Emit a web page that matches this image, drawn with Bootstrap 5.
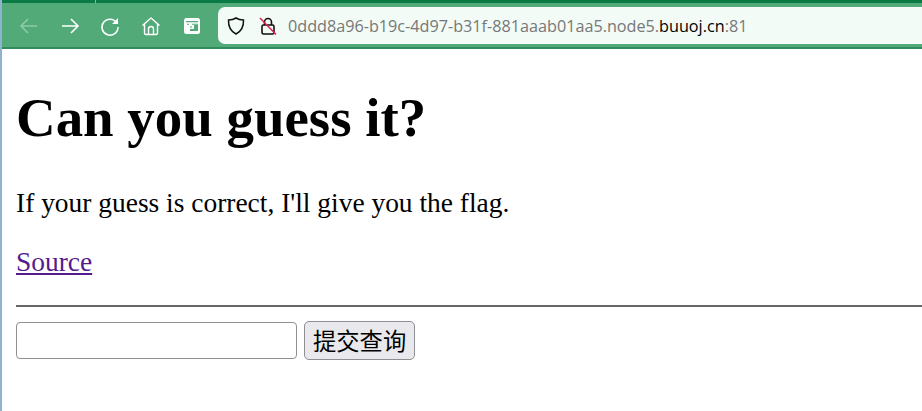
<!DOCTYPE html>
<html lang="en">
<head>
  <meta charset="UTF-8">
  <title>Can you guess it?</title>
  <link href="https://cdn.jsdelivr.net/npm/bootstrap@5.3.0/dist/css/bootstrap.min.css" rel="stylesheet">
  <style>
    html, body { height: 100%; overflow: hidden; }
    body { background: #fff; font-family: "Liberation Serif", serif; font-size: 27.45px; line-height: normal; color: #000; }
    .win-frame { height: 411px; border-left: 2px solid #8fb3cf; }
    .top-strip { height: 3px; background: #0a7a45; }
    .strip-tab { width: 94px; height: 3px; border-right: 1px solid #7fbf9c; }
    .tool-bar { height: 46px; background: #53aa79; border-bottom: 2px solid #2f8d5b; padding-top: 4px; padding-bottom: 3px; }
    .tool-btn { width: 40.5px; height: 24px; flex: none; }
    .tool-btn svg { display: block; }
    .tool-icons { padding-left: 15px; width: 216px; flex: none; }
    .addr-box { background: #f2fbf6; border-radius: 7px 0 0 7px; height: 37px; padding-left: 8px; font-family: "Open Sans", "Noto Sans", sans-serif; font-size: 16.2px; color: #777; }
    .addr-ico { width: 32px; flex: none; }
    .addr-url { margin-left: -2px; white-space: nowrap; }
    .addr-url b { font-weight: 400; color: #000; }
    .page-body { padding: 0 0 0 14px; }
    .page-body h1 { font-family: inherit; font-size: 54.9px; font-weight: 700; line-height: normal; margin: 37px 0 39px; }
    .page-body p { margin: 27.5px 0; }
    .src-link { color: #551a8b; text-decoration: underline; }
    .page-rule { border: 0; border-top: 2px solid #666; opacity: 1; margin: 26px 0 14px; }
    .guess-input { width: 281px; height: 37px; border: 1px solid #8e8e93; border-radius: 4px; background: #fff; font-size: 16px; padding: 0 2px; }
    .guess-btn { height: 39px; margin-left: 7px; padding: 0 8px; border: 1px solid #8e8e93; border-radius: 5px; background: #e9e9ed; font-family: "Noto Sans CJK SC", sans-serif; font-size: 23.3px; line-height: 1; color: #000; }
  </style>
</head>
<body>
  <div class="win-frame">
    <div class="top-strip"><div class="strip-tab"></div></div>
    <div class="tool-bar d-flex align-items-center">
      <div class="tool-icons d-flex align-items-center">
        <div class="tool-btn"><svg width="24" height="24" viewBox="0 0 24 24" fill="none" stroke="#8fcaa9" stroke-width="1.6"><path d="M4 12h16M11 5l-7 7 7 7"/></svg></div>
        <div class="tool-btn"><svg width="24" height="24" viewBox="0 0 24 24" fill="none" stroke="#fff" stroke-width="1.6"><path d="M4 12h16M13 5l7 7-7 7"/></svg></div>
        <div class="tool-btn"><svg width="24" height="24" viewBox="0 0 24 24" fill="none" stroke="#fff" stroke-width="1.5"><path d="M18.500 8.500A8 8 0 1 0 20 13"/><path d="M20 4v6h-6z" fill="#fff" stroke="none"/></svg></div>
        <div class="tool-btn"><svg width="24" height="24" viewBox="0 0 24 24" fill="none" stroke="#fff" stroke-width="1.400" stroke-linejoin="round"><path d="M3.500 11.500 12 4l8.500 7.500M5.500 10v9a1.500 1.500 0 0 0 1.500 1.500h10a1.500 1.500 0 0 0 1.500-1.500v-9"/><path d="M9.500 20.500v-5.500a2.500 2.500 0 0 1 5 0v5.500"/></svg></div>
        <div class="tool-btn"><svg width="24" height="24" viewBox="0 0 24 24"><rect x="5" y="4" width="16" height="16" rx="2.500" fill="#fff"/><path d="M7 7h12v1.200H7zM8 9.800h2v1H8zM13 9.800h6v1H13zM11 12.500h2v1h-2zM15 11h4v6h-8v-2h4z" fill="#53aa79"/></svg></div>
      </div>
      <div class="addr-box d-flex align-items-center flex-grow-1">
        <div class="addr-ico"><svg class="d-block" width="20" height="20" viewBox="0 0 20 20" fill="none" stroke="#111" stroke-width="1.500"><path d="M10 2c2 1.300 4.500 2 7.500 2 .3 6.500-1.700 11-7.500 14-5.800-3-7.800-7.500-7.500-14 3 0 5.500-.7 7.500-2z"/></svg></div>
        <div class="addr-ico"><svg class="d-block" width="20" height="20" viewBox="0 0 20 20" fill="none"><path d="M6.500 9V6a3.500 3.500 0 0 1 7 0v3" stroke="#111" stroke-width="1.600"/><rect x="4" y="9" width="12" height="9" rx="1.500" stroke="#111" stroke-width="1.600"/><path d="M2 2l16 16.500" stroke="#e0234e" stroke-width="1.500"/></svg></div>
        <div class="addr-url">0ddd8a96-b19c-4d97-b31f-881aaab01aa5.node5.<b>buuoj.cn</b>:81</div>
      </div>
    </div>
    <div class="page-body">
      <h1>Can you guess it?</h1>
      <p>If your guess is correct, I'll give you the flag.</p>
      <p><a class="src-link" href="#">Source</a></p>
      <hr class="page-rule">
      <form class="d-flex align-items-center">
        <input class="guess-input" type="text">
        <button class="guess-btn" type="button">提交查询</button>
      </form>
    </div>
  </div>
</body>
</html>
